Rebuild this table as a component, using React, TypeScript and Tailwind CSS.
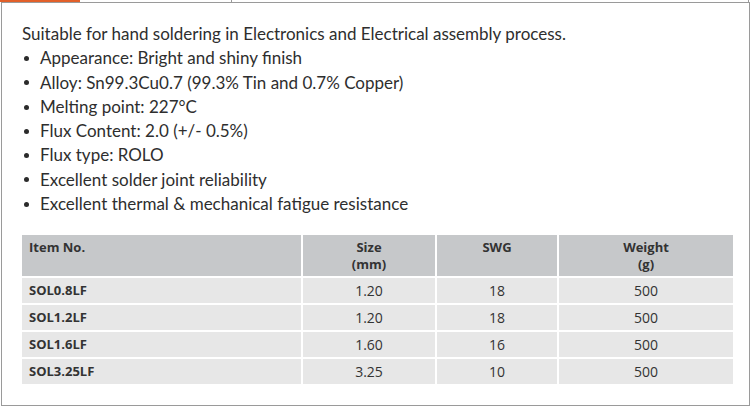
import React from "react";

const features = [
	"Appearance: Bright and shiny finish",
	"Alloy: Sn99.3Cu0.7 (99.3% Tin and 0.7% Copper)",
	"Melting point: 227°C",
	"Flux Content: 2.0 (+/- 0.5%)",
	"Flux type: ROLO",
	"Excellent solder joint reliability",
	"Excellent thermal & mechanical fatigue resistance",
];

const rows = [
	{ item: "SOL0.8LF", size: "1.20", swg: "18", weight: "500" },
	{ item: "SOL1.2LF", size: "1.20", swg: "18", weight: "500" },
	{ item: "SOL1.6LF", size: "1.60", swg: "16", weight: "500" },
	{ item: "SOL3.25LF", size: "3.25", swg: "10", weight: "500" },
];

export default function App() {
	return (
		<div className="w-[754px] h-[409px] bg-white">
			{/* Tab strip */}
			<div className="flex h-[2px]">
				<div className="w-[80px] bg-[#e2602a]" />
				<div className="ml-[151px] w-px bg-[#9a9a9a]" />
				<div className="ml-[516px] w-px bg-[#9a9a9a]" />
			</div>

			{/* Description panel */}
			<div
				className="ml-px w-[749px] h-[404px] border border-[#9a9a9a] pt-[19px] pl-[20px] text-[#2e2e2e]"
				style={{ fontFamily: "Lato, 'Open Sans', sans-serif" }}
			>
				<p className="text-[17px] leading-[24.3px]">
					Suitable for hand soldering in Electronics and Electrical assembly process.
				</p>
				<ul className="text-[17px] leading-[24.3px]">
					{features.map((f) => (
						<li key={f} className="flex items-center">
							<span className="ml-[2px] mr-[11px] w-[5px] h-[5px] rounded-full bg-[#2b2b2b]" />
							<span>{f}</span>
						</li>
					))}
				</ul>

				{/* Spec table */}
				<table
					className="mt-[17px] -ml-[2px] w-[715px] table-fixed border-collapse text-[#333]"
					style={{ fontFamily: "'Open Sans', sans-serif" }}
				>
					<colgroup>
						<col className="w-[281px]" />
						<col className="w-[134px]" />
						<col className="w-[122px]" />
						<col />
					</colgroup>
					<thead>
						<tr className="bg-[#c6c8ca] text-[13px] font-bold leading-[17px]">
							<th className="h-[43px] border-2 border-white pl-[7px] pt-[4px] text-left align-top">
								Item No.
							</th>
							<th className="border-2 border-white pt-[4px] text-center align-top">
								<span className="block">Size</span>
								<span className="block">(mm)</span>
							</th>
							<th className="border-2 border-white pt-[4px] text-center align-top">SWG</th>
							<th className="border-2 border-white pt-[4px] text-center align-top">
								<span className="block">Weight</span>
								<span className="block">(g)</span>
							</th>
						</tr>
					</thead>
					<tbody>
						{rows.map((r) => (
							<tr key={r.item} className="bg-[#e7e7e7] h-[27px]">
								<td className="border-2 border-white pl-[7px] text-[13px] font-bold">{r.item}</td>
								<td className="border-2 border-white text-center text-[14px]">{r.size}</td>
								<td className="border-2 border-white text-center text-[14px]">{r.swg}</td>
								<td className="border-2 border-white text-center text-[14px]">{r.weight}</td>
							</tr>
						))}
					</tbody>
				</table>
			</div>
		</div>
	);
}
